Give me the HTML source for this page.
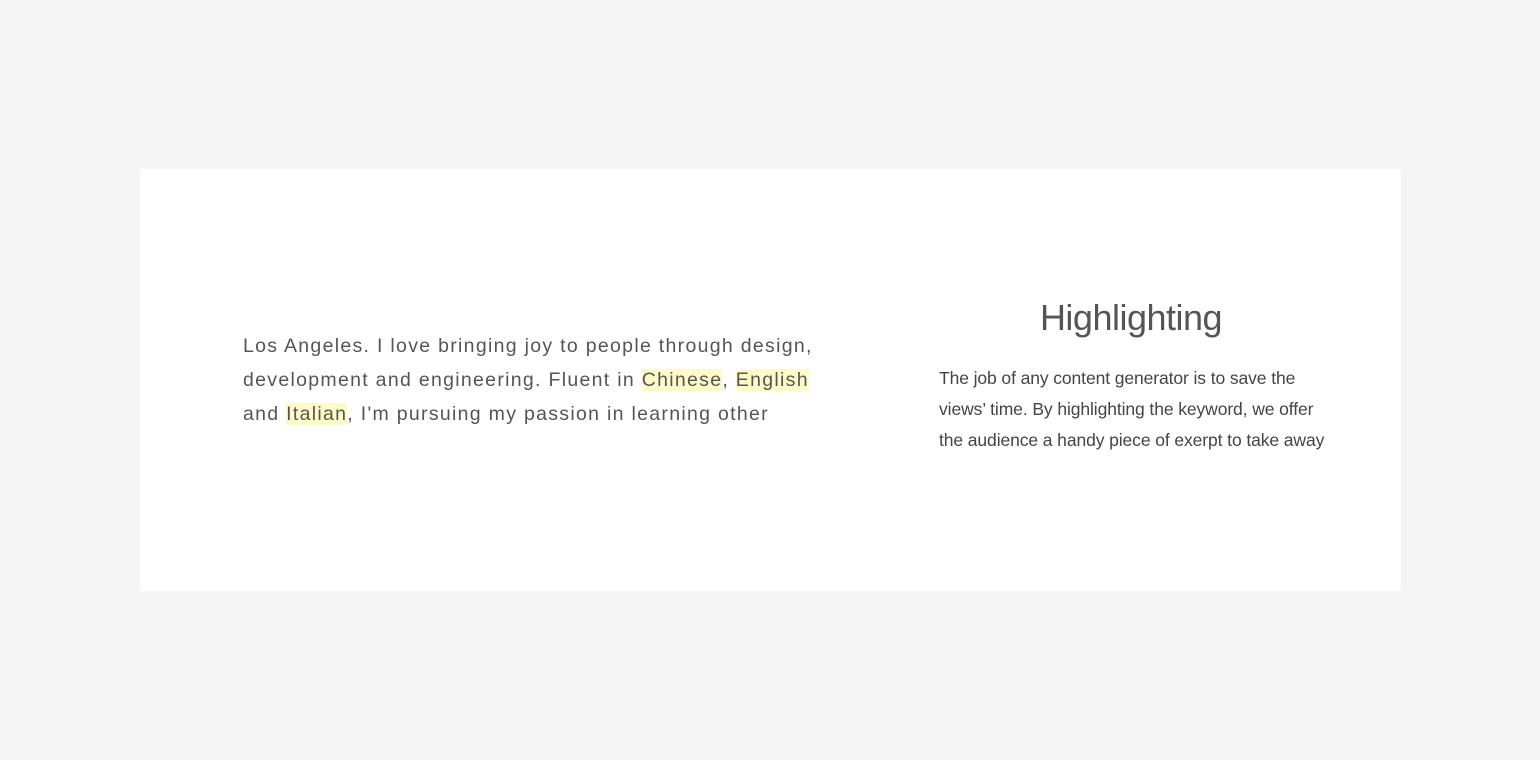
<!DOCTYPE html>
<html><head><style>
body{margin:0;background:#f5f5f5;width:1540px;height:760px;position:relative;font-family:"Liberation Sans",sans-serif;}
.card{position:absolute;left:140px;top:169px;width:1261px;height:422px;background:#fff;}
.left{position:absolute;left:243px;top:329px;width:600px;font-size:19.5px;line-height:34px;color:#555;letter-spacing:1.3px;white-space:nowrap;}
.hl{background:#fffbc8;}
h2{position:absolute;left:900px;width:462px;top:297px;margin:0;text-align:center;font-weight:300;font-size:36px;color:#555;letter-spacing:-0.5px;}
.right{position:absolute;left:939px;top:363px;font-size:17.5px;line-height:31px;color:#444;white-space:nowrap;letter-spacing:-0.1px;}
</style></head><body>
<div class="card"></div>
<div class="left">Los Angeles. I love bringing joy to people through design,<br>development and engineering. Fluent in <span class="hl">Chinese</span>, <span class="hl">English</span><br>and <span class="hl">Italian</span>, I'm pursuing my passion in learning other</div>
<h2>Highlighting</h2>
<div class="right">The job of any content generator is to save the<br>views’ time. By highlighting the keyword, we offer<br>the audience a handy piece of exerpt to take away</div>
</body></html>
